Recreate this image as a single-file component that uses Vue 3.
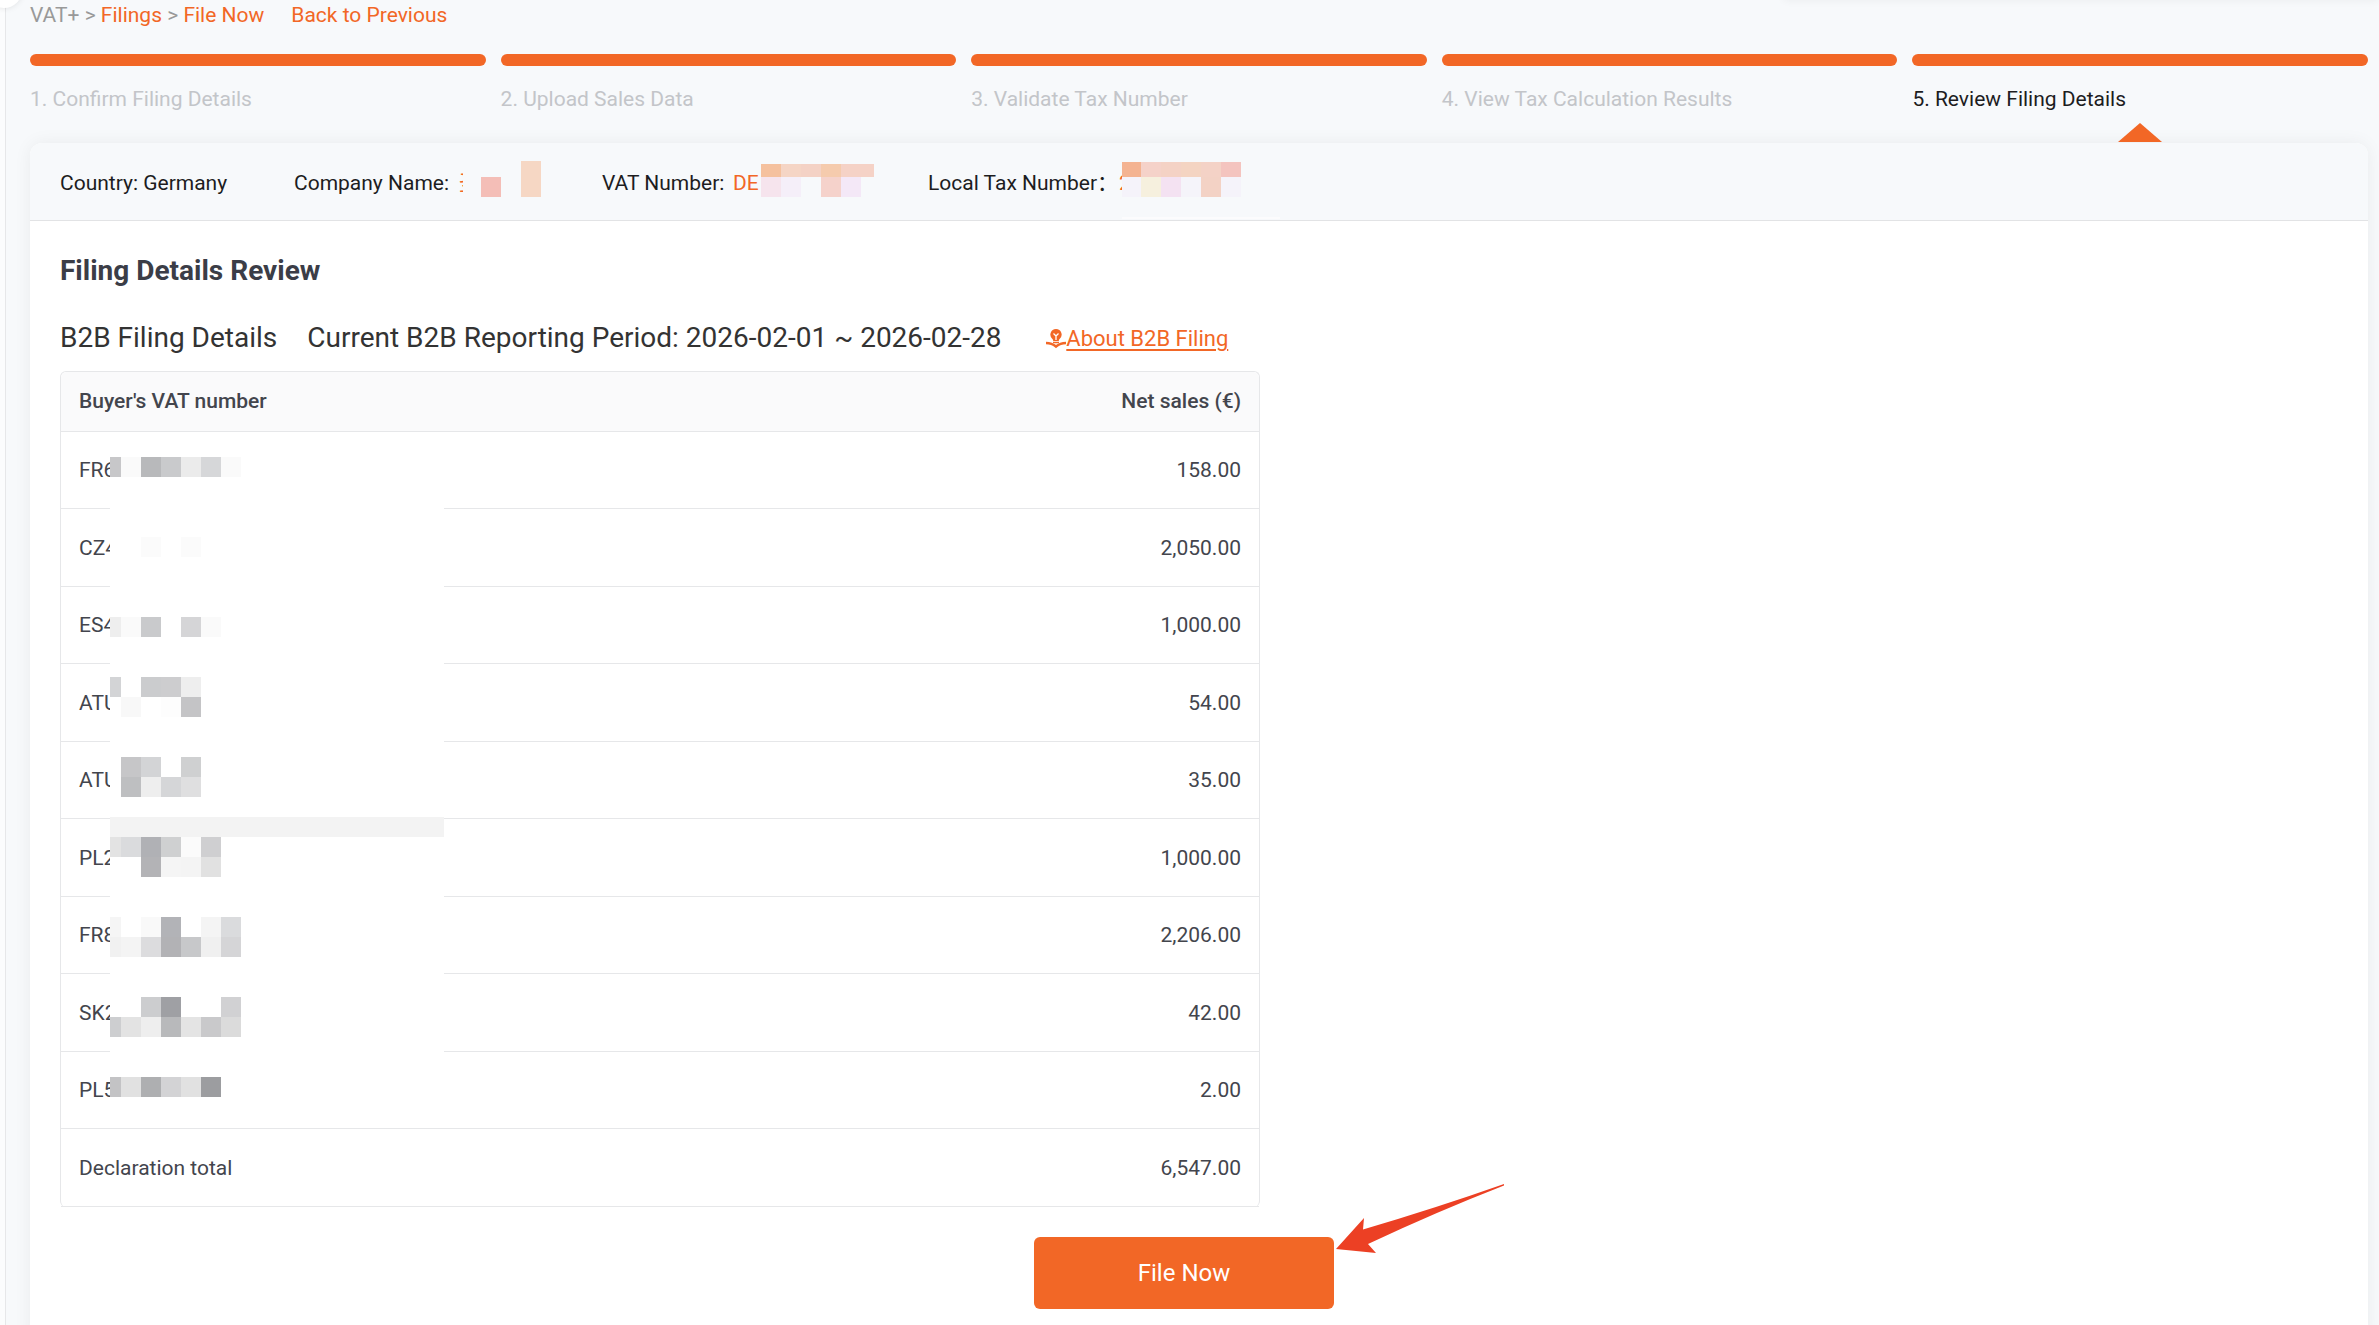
<script setup>
const steps = [
  'Confirm Filing Details',
  'Upload Sales Data',
  'Validate Tax Number',
  'View Tax Calculation Results',
  'Review Filing Details',
]

const rows = [
  { vat: 'FR6', net: '158.00' },
  { vat: 'CZ4', net: '2,050.00' },
  { vat: 'ES4', net: '1,000.00' },
  { vat: 'ATU', net: '54.00' },
  { vat: 'ATU', net: '35.00' },
  { vat: 'PL2', net: '1,000.00' },
  { vat: 'FR8', net: '2,206.00' },
  { vat: 'SK2', net: '42.00' },
  { vat: 'PL5', net: '2.00' },
]

// Redaction mosaic over the VAT column: line index -> colours of its cells
const mosaic = {
  0: ['#c7c7c9', '#fafafa', '#b8b9bb', '#c9cacc', '#ebebeb', '#d6d7d9', '#fafafa'],
  4: ['', '', '#fbfbfb', '', '#fbfbfb'],
  8: ['#eeeeee', '#fafafa', '#c9cacc', '', '#d5d5d7', '#fafafa'],
  11: ['#d3d4d6', '', '#cbccce', '#cdcdcf', '#eeeeee'],
  12: ['', '#f8f8f8', '', '#fdfdfd', '#c4c4c6'],
  15: ['', '#c6c6c8', '#d3d4d6', '', '#cfd0d1'],
  16: ['', '#bebfc1', '#eeeeee', '#d5d6d8', '#dfdfe0'],
  19: ['#e3e3e3', '#dadbdd', '#b0b1b5', '#cfd0d1', '#fbfbfb', '#cfcfd1'],
  20: ['', '', '#b3b3b6', '#f5f5f5', '#f4f4f4', '#e1e1e1'],
  23: ['#f5f5f5', '', '#f9f9f9', '#b2b3b7', '', '#f4f4f4', '#dadbdd'],
  24: ['#f1f1f1', '#f4f4f4', '#dcdcde', '#b2b2b5', '#c7c8ca', '#f0f0f0', '#d5d5d7'],
  27: ['', '', '#cccdcf', '#9fa0a4', '', '', '#d1d1d3'],
  28: ['#cdced0', '#e3e3e3', '#eeeeee', '#b8b9bb', '#e4e4e4', '#c9c9cb', '#dbdbdb'],
  31: ['#c3c3c5', '#e1e1e1', '#aeafb1', '#d3d3d5', '#e1e1e1', '#9c9da0'],
}
</script>

<template>
  <div class="shell">
    <div class="rail"></div>
    <div class="knob"></div>
    <div class="topbar"></div>
    <div class="page">
      <nav class="crumbs">
        <span>VAT+ &gt; <a href="#">Filings</a> &gt; <a href="#">File Now</a></span>
        <a href="#">Back to Previous</a>
      </nav>

      <ol class="steps">
        <li v-for="(s, i) in steps" :key="s" :class="{ current: i === 4 }">
          <div class="bar"></div>
          <span class="label">{{ i + 1 }}. {{ s }}</span>
        </li>
      </ol>

      <section class="card">
        <header class="info">
          <div class="f-country">Country: Germany</div>
          <div class="f-company">
            <span class="key">Company Name:</span><em>圣</em>
            <svg class="redact company" width="78" height="36" shape-rendering="crispEdges">
              <rect width="78" height="36" fill="#f7f9fb" />
              <rect x="18" y="16" width="20" height="20" fill="#f4beb7" />
              <rect x="58" y="0" width="20" height="36" fill="#f6d7c4" />
            </svg>
          </div>
          <div class="f-vat">
            <span class="key">VAT Number:</span><em>DE</em>
            <svg class="redact vat" width="113" height="36" shape-rendering="crispEdges">
              <rect width="20" height="13" y="3" fill="#f5c19e" />
              <rect width="20" height="13" x="20" y="3" fill="#f5d5c5" />
              <rect width="20" height="13" x="40" y="3" fill="#f4d2c5" />
              <rect width="20" height="13" x="60" y="3" fill="#f5cbad" />
              <rect width="33" height="13" x="80" y="3" fill="#f5d2c6" />
              <rect width="20" height="20" y="16" fill="#f6e4ed" />
              <rect width="20" height="20" x="20" y="16" fill="#f5eff9" />
              <rect width="20" height="20" x="60" y="16" fill="#f5d2cb" />
              <rect width="20" height="20" x="80" y="16" fill="#f4e8f7" />
            </svg>
          </div>
          <div class="f-local">
            <span class="key">Local Tax Number：</span><em>2</em>
            <svg class="redact local" width="158" height="58" shape-rendering="crispEdges">
              <rect width="19" height="15" y="1" fill="#f4b391" />
              <rect width="20" height="15" x="19" y="1" fill="#f5d2c9" />
              <rect width="20" height="15" x="39" y="1" fill="#f4d2c5" />
              <rect width="20" height="15" x="59" y="1" fill="#f4d4c2" />
              <rect width="20" height="15" x="79" y="1" fill="#f4d2c6" />
              <rect width="20" height="15" x="99" y="1" fill="#f4c4bf" />
              <rect width="19" height="20" y="16" fill="#f5f3fa" />
              <rect width="20" height="20" x="19" y="16" fill="#f6f0de" />
              <rect width="20" height="20" x="39" y="16" fill="#f4e2f2" />
              <rect width="20" height="20" x="59" y="16" fill="#f5f4fa" />
              <rect width="20" height="20" x="79" y="16" fill="#f3d2c5" />
              <rect width="20" height="20" x="99" y="16" fill="#f5f3fa" />
              <rect width="158" height="2" y="56" fill="#fcfcfd" />
            </svg>
          </div>
        </header>

        <div class="body">
          <h1>Filing Details Review</h1>
          <div class="period">
            <span>B2B Filing Details</span>
            <span class="range">Current B2B Reporting Period: 2026-02-01 ~ 2026-02-28</span>
            <a href="#" class="about">
              <svg width="20" height="20" viewBox="0 0 20 20" fill="none">
                <path d="M10 0a5.600 5.600 0 0 0-3.600 9.900c.6.500.8 1.100.8 2.100h5.600c0-1 .2-1.600.8-2.100A5.600 5.600 0 0 0 10 0z" fill="#f26726" />
                <path d="M7.500 4.500 10 7l2.500-2.500M10 7v4" stroke="#fff" stroke-width="1.300" />
                <path d="M7 13.500h6" stroke="#f26726" stroke-width="1.500" />
                <path d="M0 14c4 0 7 1 10 3.500 3-2.500 6-3.500 10-3.500" stroke="#f26726" stroke-width="2.600" />
              </svg><span>About B2B Filing</span>
            </a>
          </div>

          <div class="tablebox">
            <table>
              <thead>
                <tr><th>Buyer's VAT number</th><th>Net sales (€)</th></tr>
              </thead>
              <tbody>
                <tr v-for="(r, i) in rows" :key="i">
                  <td>{{ r.vat }}</td>
                  <td>{{ r.net }}</td>
                </tr>
                <tr><td>Declaration total</td><td>6,547.00</td></tr>
              </tbody>
            </table>
            <div class="mosaic">
              <div v-for="n in 32" :key="n" class="line" :class="{ band: n === 19 }">
                <i v-for="(c, k) in mosaic[n - 1] || []" :key="k" :style="{ background: c }"></i>
              </div>
            </div>
          </div>

          <div class="actions">
            <button type="button">File Now
              <svg class="arrow" width="170" height="70" viewBox="0 0 170 70">
                <path d="M0 65 28 34 27 45.500Q100 24 168 0L168 1.500Q100 28 32 60L40 69z" fill="#ec4024" />
              </svg>
            </button>
          </div>
        </div>
      </section>
    </div>
  </div>
</template>

<style>
body {
  margin: 0;
  background: #f7f9fb;
}
</style>

<style scoped>
.shell {
  position: relative;
  display: flex;
  min-height: 100vh;
  overflow: hidden;
  box-sizing: border-box;
  background: #f7f9fb;
  font-family: Roboto, "Noto Sans CJK SC", sans-serif;
  font-size: 21px;
  line-height: 30px;
  color: #1d1d1f;
}
a {
  color: #f26726;
  text-decoration: none;
}
.rail {
  width: 5px;
  border-right: 1px solid #e6e7e9;
  background: #fbfcfd;
}
.knob {
  position: absolute;
  left: -14px;
  top: -28px;
  width: 36px;
  height: 36px;
  border-radius: 50%;
  background: #fff;
  box-shadow: 0 0 6px rgba(0, 0, 0, 0.1);
}
.topbar {
  position: absolute;
  right: 0;
  top: -20px;
  width: 25%;
  height: 20px;
  box-shadow: 0 0 10px rgba(0, 0, 0, 0.06);
}
.page {
  flex: 1;
  display: flex;
  flex-direction: column;
  padding: 0 11px 0 24px;
}
.crumbs {
  display: flex;
  gap: 27px;
  color: #999;
}
.steps {
  display: flex;
  gap: 15px;
  margin: 24px 0 0;
  padding: 0;
  list-style: none;
}
.steps li {
  position: relative;
  flex: 1;
  height: 89px;
  color: #c3c5c9;
}
.steps .current {
  color: #1d1d1f;
}
.bar {
  height: 12px;
  margin-bottom: 18px;
  border-radius: 6px;
  background: #f26726;
}
.label {
  display: block;
}
.current::after {
  content: "";
  position: absolute;
  z-index: 1;
  left: 50%;
  bottom: 1px;
  margin-left: -22px;
  border: 22px solid transparent;
  border-top: 0;
  border-bottom: 19px solid #f26726;
}
.card {
  flex: 1;
  display: flex;
  flex-direction: column;
  border-radius: 12px 12px 0 0;
  background: #fff;
  box-shadow: 0 0 18px rgba(0, 0, 0, 0.06);
}
.info {
  display: flex;
  align-items: center;
  height: 75px;
  padding: 2px 30px 0;
  border-bottom: 1px solid #e2e3e5;
  border-radius: 12px 12px 0 0;
  background: #f7f9fb;
}
.info > div {
  position: relative;
  white-space: nowrap;
}
.info em {
  font-style: normal;
  color: #f26726;
}
.key {
  display: inline-block;
}
.f-country {
  width: 234px;
}
.f-company {
  width: 308px;
}
.f-company .key {
  width: 165px;
}
.f-vat {
  width: 326px;
}
.f-vat .key {
  width: 131px;
}
.f-local .key {
  width: 191px;
}
.redact {
  position: absolute;
  top: -7px;
}
.company {
  left: 169px;
}
.vat {
  left: 159px;
}
.local {
  left: 194px;
}
.body {
  padding: 30px;
  background: #fff;
}
h1 {
  margin: 0 0 27px;
  font-size: 28px;
  line-height: 40px;
  font-weight: 700;
  color: #3b3d47;
}
.period {
  display: flex;
  align-items: center;
  gap: 30px;
  margin-bottom: 13px;
  font-size: 28px;
  line-height: 40px;
  color: #333;
}
.range {
  min-width: 709px;
}
.about {
  display: flex;
  align-items: center;
  padding-top: 2px;
  font-size: 22px;
  line-height: 38px;
}
.about span {
  text-decoration: underline;
  text-decoration-thickness: 2px;
  text-underline-offset: 3px;
}
.tablebox {
  position: relative;
  width: 1200px;
  max-width: 100%;
}
table {
  width: 100%;
  box-sizing: border-box;
  border: 1px solid #e6e7e9;
  border-bottom: 0;
  border-radius: 6px;
  border-spacing: 0;
  color: #43454d;
}
th,
td {
  box-sizing: border-box;
  padding: 0 18px;
  border-bottom: 1px solid #e6e7e9;
  text-align: left;
}
th:last-child,
td:last-child {
  text-align: right;
}
th {
  height: 60px;
  padding-bottom: 2px;
  background: #fafafb;
  font-weight: 500;
}
th:first-child {
  border-top-left-radius: 6px;
}
th:last-child {
  border-top-right-radius: 6px;
}
td {
  height: 77px;
}
tr:nth-child(even) td {
  height: 78px;
}
.mosaic {
  position: absolute;
  left: 50px;
  top: 86px;
  width: 334px;
  background: #fff;
}
.line {
  display: flex;
  height: 20px;
}
.line i {
  width: 20px;
}
.line i:first-child {
  width: 11px;
}
.band {
  background: #f3f3f3;
}
.actions {
  display: flex;
  justify-content: center;
  padding: 30px 30px 0 0;
}
button {
  position: relative;
  width: 300px;
  height: 72px;
  padding: 0;
  border: 0;
  border-radius: 6px;
  background: #f26726;
  color: #fff;
  font: 24px/36px Roboto, sans-serif;
}
.arrow {
  position: absolute;
  left: 302px;
  top: -53px;
}
</style>
